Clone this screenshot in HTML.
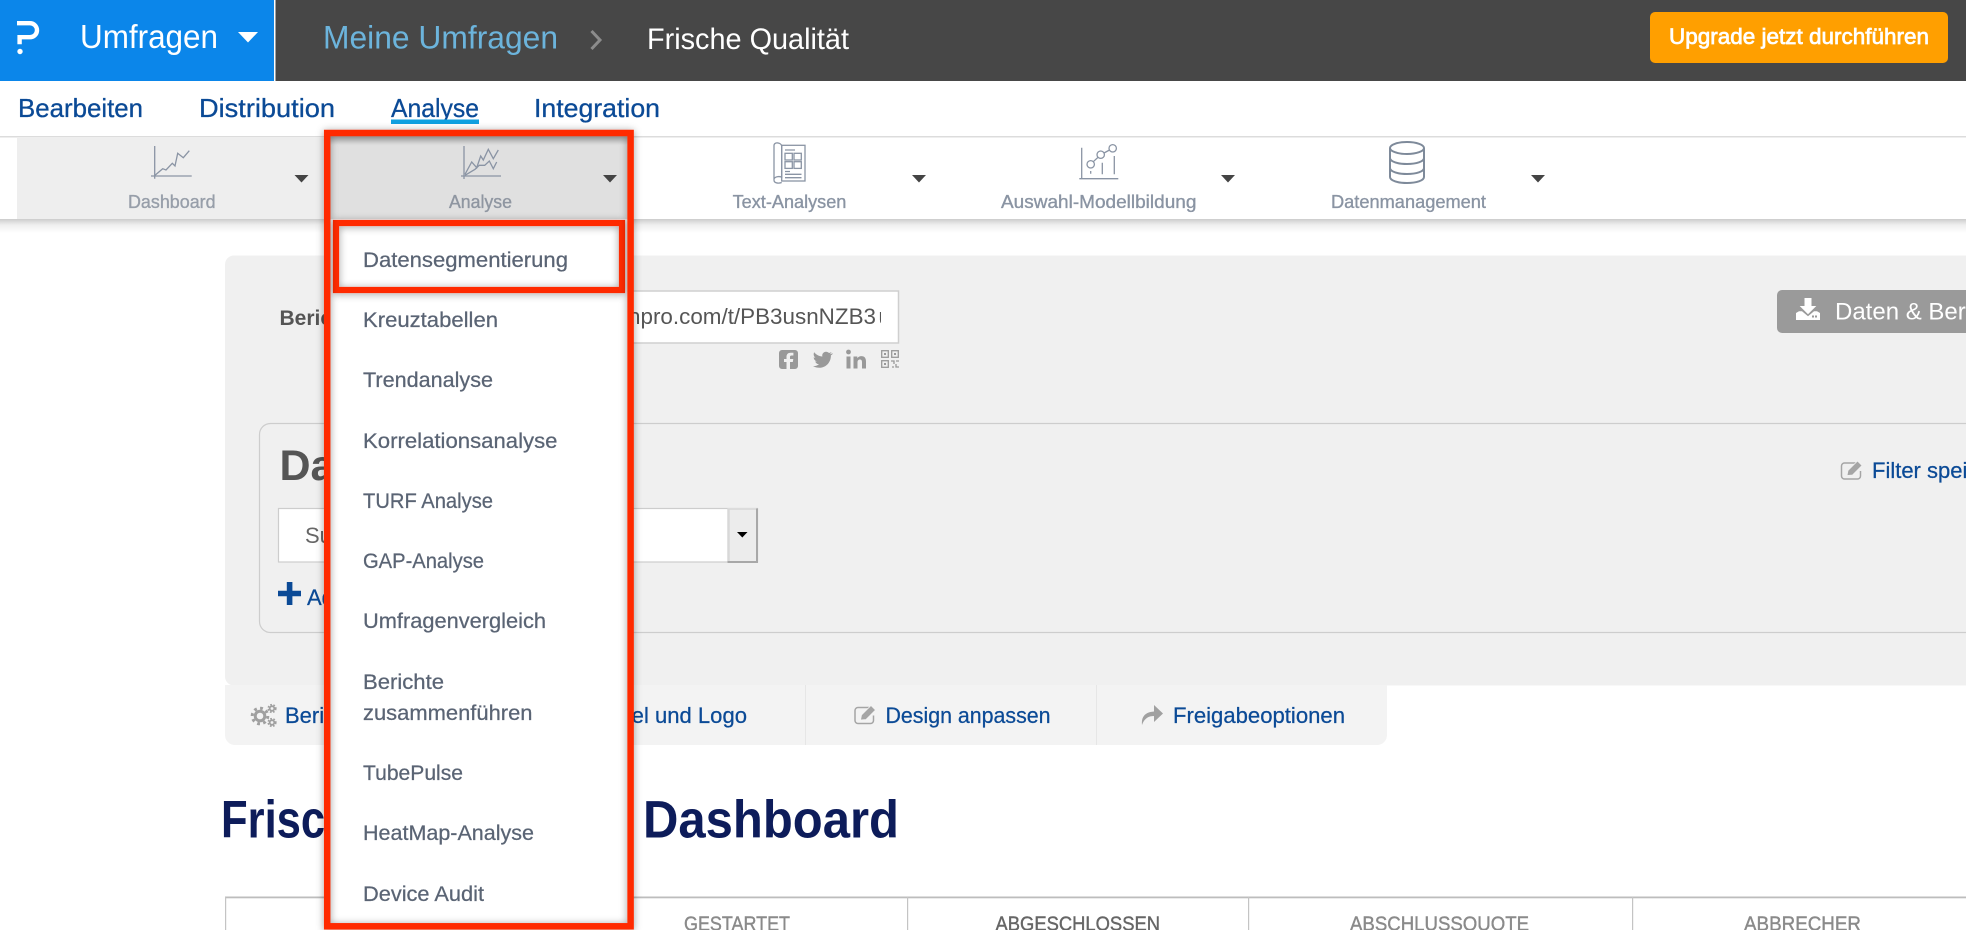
<!DOCTYPE html>
<html lang="de">
<head>
<meta charset="utf-8">
<title>Frische Qualität – Dashboard</title>
<style>
html,body{margin:0;padding:0;background:#fff;width:1966px;height:930px;overflow:hidden}
svg{display:block;position:absolute;left:0;top:0}
text{font-family:"Liberation Sans",Arial,sans-serif;white-space:pre}
.tab{font-size:26px;fill:#0b4a96;stroke:#0b4a96;stroke-width:.3px}
.tool{font-size:18.5px;fill:#8a94a3;stroke:#8a94a3;stroke-width:.35px}
.dd{font-size:21.5px;fill:#5a6474;stroke:#5a6474;stroke-width:.25px}
.link{font-size:22px;fill:#0b4a96;stroke:#0b4a96;stroke-width:.25px}
.th{font-size:20.5px;fill:#8a8a8a;stroke:#8a8a8a;stroke-width:.4px}
.ic{fill:none;stroke:#8a94a4;stroke-width:1.3}
.car{fill:#444}
</style>
</head>
<body>
<svg width="1966" height="930" viewBox="0 0 1966 930" xmlns="http://www.w3.org/2000/svg">
<defs>
<filter id="rs" x="-10%" y="-10%" width="120%" height="120%"><feDropShadow dx="0" dy="1" stdDeviation="4" flood-color="#000" flood-opacity=".38"/></filter>
<filter id="rs2" x="-15%" y="-40%" width="130%" height="180%"><feDropShadow dx="0" dy="1" stdDeviation="4" flood-color="#000" flood-opacity=".38"/></filter>
<clipPath id="urlclip"><rect x="630" y="295" width="251" height="45"/></clipPath>
<linearGradient id="topsh" x1="0" y1="0" x2="0" y2="1"><stop offset="0" stop-color="#b4b4b4"/><stop offset="1" stop-color="#e0e0e0"/></linearGradient>
<linearGradient id="barsh" x1="0" y1="0" x2="0" y2="1"><stop offset="0" stop-color="#000" stop-opacity=".2"/><stop offset=".4" stop-color="#000" stop-opacity=".07"/><stop offset="1" stop-color="#000" stop-opacity="0"/></linearGradient>
</defs>

<!-- main panel -->
<rect x="225" y="255.500" width="1800" height="430" rx="9" fill="#f0f0f0"/>
<rect x="225" y="685" width="1162" height="60" fill="#f3f3f3"/>
<path d="M225 735v10h10a10 10 0 0 1-10-10zM1387 735v10h-10a10 10 0 0 0 10-10z" fill="#fff"/>
<rect x="805" y="685" width="1" height="60" fill="#e6e6e6"/>
<rect x="1096" y="685" width="1" height="60" fill="#e6e6e6"/>

<!-- top bar -->
<rect x="0" y="0" width="1966" height="81" fill="#474747"/>
<rect x="0" y="0" width="274" height="81" fill="#0b86ea"/>
<rect x="274" y="0" width="1.500" height="81" fill="#fff"/>
<path d="M17 23.200H30a7 7 0 0 1 0 14H19.600v7" fill="none" stroke="#fff" stroke-width="4.400"/>
<circle cx="20" cy="51.500" r="2.700" fill="#fff"/>
<text x="80" y="48" font-size="33" fill="#fff" textLength="138" lengthAdjust="spacingAndGlyphs">Umfragen</text>
<path d="M238 32h20l-10 10.500z" fill="#fff"/>
<text x="323" y="48.500" font-size="32" fill="#6cb4dc" textLength="235" lengthAdjust="spacingAndGlyphs">Meine Umfragen</text>
<path d="M591.500 31l8.500 9-8.500 9" fill="none" stroke="#8c8c8c" stroke-width="3"/>
<text x="647" y="49" font-size="29.500" fill="#fff" textLength="202" lengthAdjust="spacingAndGlyphs">Frische Qualität</text>
<rect x="1650" y="12" width="298" height="51" rx="5" fill="#ff9f00"/>
<text x="1669" y="44" font-size="22" fill="#fff" stroke="#fff" stroke-width=".7" textLength="260" lengthAdjust="spacingAndGlyphs">Upgrade jetzt durchführen</text>

<!-- tabs -->
<text class="tab" x="18" y="117" textLength="125" lengthAdjust="spacingAndGlyphs">Bearbeiten</text>
<text class="tab" x="199" y="117" textLength="136" lengthAdjust="spacingAndGlyphs">Distribution</text>
<text class="tab" x="391" y="117" textLength="88" lengthAdjust="spacingAndGlyphs">Analyse</text>
<rect x="391" y="119.500" width="88" height="4.500" fill="#0fa0e0"/>
<text class="tab" x="534" y="117" textLength="126" lengthAdjust="spacingAndGlyphs">Integration</text>

<!-- toolbar -->
<rect x="0" y="219" width="1966" height="14" fill="url(#barsh)"/>
<rect x="0" y="136" width="1966" height="1.500" fill="#dcdcdc"/>
<rect x="17" y="137" width="307" height="82" fill="#eeeeee"/>

<g class="ic">
<path d="M154.700 146V178.700M151 176H191.700"/>
<path d="M155 175.300L162.700 168.700 166 170 172.300 163.300 175 166 177.700 153.300 183.300 157.700 189.300 150.700"/>
<!-- text analysis scroll/book -->
<rect x="781.700" y="145.300" width="23.300" height="35.700"/>
<path d="M781.700 146c-.5-3.500-7.700-4.500-7.700-.5V180c0 3.500 5 3.500 7.700 2.500M774 179c1-2.500 5-3 7.700-1.800V146"/>
<rect x="785" y="153.300" width="7.300" height="6.700"/>
<rect x="794" y="153.300" width="7.300" height="6.700"/>
<rect x="785" y="161.700" width="7.300" height="6.700"/>
<rect x="794" y="161.700" width="7.300" height="6.700"/>
<path d="M785 150h10M785 171.500h5M785 174.300h16.500M785 177.700h16.500"/>
<!-- model icon -->
<path d="M1081.700 147.700V179.300M1079.300 178.700H1118.300"/>
<circle cx="1090.700" cy="164.300" r="3.700"/>
<circle cx="1100.700" cy="154.700" r="3.700"/>
<circle cx="1112.700" cy="148.300" r="3.700"/>
<path d="M1093.300 161.700L1098 157.300M1104 153L1109.500 150M1102.300 162.700V174.300M1114.300 156V174.300M1090.700 171V173.700"/>
</g>

<g fill="none" stroke="#7e8a9a" stroke-width="2">
<ellipse cx="1407" cy="148" rx="17" ry="6"/>
<path d="M1390 148V177c0 3.500 7.600 6 17 6s17-2.500 17-6V148M1390 158c0 3.500 7.600 6 17 6s17-2.500 17-6M1390 168c0 3.500 7.600 6 17 6s17-2.500 17-6"/>
</g>

<text class="tool" x="128" y="208" style="fill:#979ea9;stroke:#979ea9" textLength="87.600" lengthAdjust="spacingAndGlyphs">Dashboard</text>
<text class="tool" x="732.600" y="208" textLength="113.800" lengthAdjust="spacingAndGlyphs">Text-Analysen</text>
<text class="tool" x="1001" y="208" textLength="195.400" lengthAdjust="spacingAndGlyphs">Auswahl-Modellbildung</text>
<text class="tool" x="1331" y="208" textLength="155" lengthAdjust="spacingAndGlyphs">Datenmanagement</text>
<path class="car" d="M294.500 175h14l-7 7.500z"/>
<path class="car" d="M912 175h14l-7 7.500z"/>
<path class="car" d="M1221 175h14l-7 7.500z"/>
<path class="car" d="M1531 175h14l-7 7.500z"/>

<!-- report row -->
<text x="279.500" y="325" font-size="21" font-weight="700" fill="#555">Bericht</text>
<rect x="500" y="291" width="398.500" height="52" fill="#fff" stroke="#cfcfcf" stroke-width="1.500"/>
<text x="628" y="324" font-size="22" fill="#555" textLength="248" lengthAdjust="spacingAndGlyphs">npro.com/t/PB3usnNZB3</text>
<text x="878.500" y="324" font-size="22" fill="#555" clip-path="url(#urlclip)">u</text>

<!-- social -->
<g fill="#999">
<path fill-rule="evenodd" d="M782 350h13a3 3 0 0 1 3 3v13a3 3 0 0 1-3 3h-5v-7h2.800l.5-3h-3.300v-2c0-1 .4-1.500 1.600-1.500h1.800v-2.800h-2.600c-3 0-4.300 1.700-4.300 4.200v2.100h-2.500v3h2.500v7H782a3 3 0 0 1-3-3v-13a3 3 0 0 1 3-3z"/>
<path d="M832 353.500c-.8.400-1.500.6-2.300.7.800-.5 1.500-1.300 1.800-2.200-.8.500-1.600.8-2.500 1-1.700-1.900-5-1.700-6.300.6-.5.900-.6 1.900-.3 2.900-3.300-.2-6.200-1.800-8.200-4.300-1 1.900-.5 4.300 1.300 5.500-.7 0-1.300-.2-1.800-.5 0 2 1.400 3.700 3.300 4.100-.6.200-1.200.2-1.800.1.500 1.600 2 2.800 3.800 2.800-1.700 1.400-3.800 2-6 1.800 1.900 1.200 4 1.800 6.300 1.800 7.500 0 11.800-6.400 11.600-12.400.9-.6 1.600-1.300 2.100-1.900z"/>
<rect x="846.500" y="356.500" width="4" height="12"/>
<circle cx="848.500" cy="352" r="2.400"/>
<path d="M853.500 356.500h3.800v1.800c.8-1.300 2.200-2.200 4-2.200 3.500 0 4.700 2.200 4.700 5.600v6.800h-4v-6.200c0-1.700-.5-2.800-2.100-2.800s-2.400 1.200-2.400 2.900v6.100h-4z"/>
</g>
<g fill="none" stroke="#999" stroke-width="1.300">
<rect x="881.700" y="350.700" width="6.600" height="6.600"/><rect x="891.700" y="350.700" width="6.600" height="6.600"/><rect x="881.700" y="360.700" width="6.600" height="6.600"/>
<path d="M891 361h3v3M896 361h3M892 367h2M896 364v3h3"/>
</g>
<g fill="#999"><rect x="884" y="353" width="2" height="2"/><rect x="894" y="353" width="2" height="2"/><rect x="884" y="363" width="2" height="2"/></g>

<!-- download button -->
<path d="M1966 290H1782a5 5 0 0 0-5 5v33a5 5 0 0 0 5 5h184z" fill="#9a9a9a"/>
<path d="M1804.500 298h7v8h4.800l-8.300 8.300-8.300-8.300h4.800z" fill="#fff"/>
<path fill-rule="evenodd" d="M1796 320v-7l3-1.800h3l6 5 6-5h3l3 1.800v7zM1815 315.500v2h2v-2zM1812 315.500v2h2v-2z" fill="#fff"/>
<text x="1835" y="319.500" font-size="24" fill="#fff">Daten &amp; Berichte</text>

<!-- filter box -->
<rect x="259.500" y="423.500" width="1800" height="209" rx="11" fill="#f0f0f0" stroke="#cdcdcd" stroke-width="1.200"/>
<text x="279.500" y="480" font-size="43" font-weight="700" fill="#555">Datensegment</text>
<rect x="278.500" y="508.500" width="479" height="53.500" fill="#fff" stroke="#cdcdcd" stroke-width="1.200"/>
<text x="305" y="543" font-size="22" fill="#666">Sum</text>
<rect x="727.500" y="508.500" width="30" height="53.500" fill="#ececec"/>
<path d="M728 509h29" fill="none" stroke="#dcdcdc" stroke-width="2"/>
<path d="M728.500 509v53" fill="none" stroke="#d8d8d8" stroke-width="2.500"/>
<path d="M757 508.500v53.500h-29.500" fill="none" stroke="#a8a8a8" stroke-width="2"/>
<path d="M737 532h10.500l-5.200 5.500z" fill="#000"/>
<path d="M286.800 582h5.600v8.700h8.600v5.500h-8.600v8.800h-5.600v-8.800H278v-5.500h8.800z" fill="#0b4a96"/>
<text class="link" x="307" y="605">Add</text>
<path d="M1858 463h-13.500a3 3 0 0 0-3 3v10a3 3 0 0 0 3 3h13a3 3 0 0 0 3-3v-5" fill="none" stroke="#a5a5a5" stroke-width="1.500"/>
<path d="M1847 475.500l1-5 9.500-9.500 4.500 4.500-9.500 9.500z" fill="#a5a5a5" stroke="#f0f0f0" stroke-width=".8"/>
<text class="link" x="1872" y="478">Filter speichern</text>

<!-- tabs under panel -->
<g fill="none" stroke="#a0a0a0">
<circle cx="260" cy="716" r="4.800" stroke-width="3"/>
<circle cx="260" cy="716" r="7.800" stroke-width="3" stroke-dasharray="2.800 3.300"/>
<circle cx="272" cy="708.500" r="2.300" stroke-width="1.800"/>
<circle cx="272" cy="708.500" r="3.800" stroke-width="1.600" stroke-dasharray="1.700 1.500"/>
<circle cx="272" cy="722.500" r="2.300" stroke-width="1.800"/>
<circle cx="272" cy="722.500" r="3.800" stroke-width="1.600" stroke-dasharray="1.700 1.500"/>
</g>
<text class="link" x="285" y="723">Berichtsoptionen</text>
<text class="link" x="608" y="723" textLength="139" lengthAdjust="spacingAndGlyphs">Titel und Logo</text>
<path d="M871 707.500h-13a3 3 0 0 0-3 3v10a3 3 0 0 0 3 3h12.500a3 3 0 0 0 3-3v-5" fill="none" stroke="#a5a5a5" stroke-width="1.500"/>
<path d="M860.500 720l1-5 9.500-9.500 4.500 4.500-9.500 9.500z" fill="#a5a5a5" stroke="#f3f3f3" stroke-width=".8"/>
<text class="link" x="885.500" y="723" textLength="165" lengthAdjust="spacingAndGlyphs">Design anpassen</text>
<path d="M1142 725c-1-9 4-13 12-13.500V705l9 8.500-9 8.500v-6c-6 0-10 3-12 9z" fill="#a0a0a0"/>
<text class="link" x="1173" y="723" textLength="172" lengthAdjust="spacingAndGlyphs">Freigabeoptionen</text>

<!-- title -->
<text x="221" y="837.500" font-size="53" font-weight="700" fill="#0d1c5a" textLength="155" lengthAdjust="spacingAndGlyphs">Frische</text>
<text x="643" y="837.500" font-size="53" font-weight="700" fill="#0d1c5a" textLength="256" lengthAdjust="spacingAndGlyphs">Dashboard</text>

<!-- table -->
<rect x="225" y="896.500" width="1741" height="1.800" fill="#bdbdbd"/>
<rect x="225" y="897" width="1.200" height="33" fill="#c4c4c4"/>
<rect x="907" y="897" width="1.200" height="33" fill="#c4c4c4"/>
<rect x="1248" y="897" width="1.200" height="33" fill="#c4c4c4"/>
<rect x="1632" y="897" width="1.200" height="33" fill="#c4c4c4"/>
<text class="th" x="684" y="930.500" textLength="106" lengthAdjust="spacingAndGlyphs">GESTARTET</text>
<text class="th" x="995.500" y="930.500" style="fill:#666;stroke:#666" textLength="164.500" lengthAdjust="spacingAndGlyphs">ABGESCHLOSSEN</text>
<text class="th" x="1350" y="930.500" textLength="179" lengthAdjust="spacingAndGlyphs">ABSCHLUSSQUOTE</text>
<text class="th" x="1744" y="930.500" textLength="117" lengthAdjust="spacingAndGlyphs">ABBRECHER</text>

<!-- dropdown -->
<rect x="330" y="136" width="298" height="83" fill="#e0e0e0"/>
<rect x="330" y="136" width="298" height="9" fill="url(#topsh)"/>
<g class="ic">
<path d="M464 146V179M461 176H501"/>
<path d="M465 174.300L471.700 162 476.700 167.700 480.700 156 483.300 160 488.300 149.300 493.300 158.700 498.300 150"/>
<path d="M465 175.300L475 169.300 479.300 165.300 484.700 165.300 489.300 161 493.300 168.700 496.700 162"/>
</g>
<text class="tool" x="449" y="208" style="fill:#8f96a1;stroke:#8f96a1" textLength="63" lengthAdjust="spacingAndGlyphs">Analyse</text>
<path class="car" d="M603 175h14l-7 7.500z"/>
<rect x="330" y="219" width="298" height="708" fill="#fff"/>

<rect x="336" y="223" width="286" height="67" fill="none" stroke="#ff2a00" stroke-width="6.200" filter="url(#rs2)"/>
<rect x="327.200" y="133" width="303.400" height="793.300" fill="none" stroke="#ff2a00" stroke-width="6.500" filter="url(#rs)"/>

<text class="dd" x="363" y="267" textLength="205" lengthAdjust="spacingAndGlyphs">Datensegmentierung</text>
<text class="dd" x="363" y="327" textLength="135" lengthAdjust="spacingAndGlyphs">Kreuztabellen</text>
<text class="dd" x="363" y="387" textLength="130" lengthAdjust="spacingAndGlyphs">Trendanalyse</text>
<text class="dd" x="363" y="448" textLength="194.500" lengthAdjust="spacingAndGlyphs">Korrelationsanalyse</text>
<text class="dd" x="363" y="508" textLength="130" lengthAdjust="spacingAndGlyphs">TURF Analyse</text>
<text class="dd" x="363" y="568" textLength="121" lengthAdjust="spacingAndGlyphs">GAP-Analyse</text>
<text class="dd" x="363" y="628" textLength="183" lengthAdjust="spacingAndGlyphs">Umfragenvergleich</text>
<text class="dd" x="363" y="689" textLength="81" lengthAdjust="spacingAndGlyphs">Berichte</text>
<text class="dd" x="363" y="720" textLength="169.500" lengthAdjust="spacingAndGlyphs">zusammenführen</text>
<text class="dd" x="363" y="780" textLength="100" lengthAdjust="spacingAndGlyphs">TubePulse</text>
<text class="dd" x="363" y="840" textLength="171" lengthAdjust="spacingAndGlyphs">HeatMap-Analyse</text>
<text class="dd" x="363" y="901" textLength="121" lengthAdjust="spacingAndGlyphs">Device Audit</text>
</svg>
</body>
</html>
